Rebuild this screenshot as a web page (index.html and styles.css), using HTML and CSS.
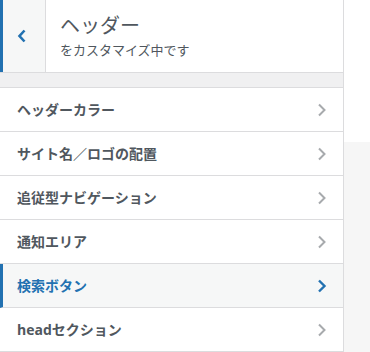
FILE: index.html
```html
<!DOCTYPE html>
<html lang="ja">
<head>
<meta charset="utf-8">
<link rel="stylesheet" href="styles.css">
</head>
<body>
<div class="layout">
  <div class="panel">
    <div class="head">
      <button class="back" aria-label="戻る">
        <svg width="10" height="14" viewBox="0 0 10 14"><polyline points="7.5,1.5 2.5,7 7.5,12.5" fill="none" stroke="#2271b1" stroke-width="2.6"/></svg>
      </button>
      <div class="titles">
        <div class="title">ヘッダー</div>
        <div class="sub">をカスタマイズ中です</div>
      </div>
    </div>
    <div class="strip"></div>
    <ul class="list">
      <li class="row"><span>ヘッダーカラー</span><svg class="chev" width="10" height="14" viewBox="0 0 10 14"><polyline points="2,1.5 7.5,7 2,12.5" fill="none" stroke="#a7aaad" stroke-width="2"/></svg></li>
      <li class="row"><span>サイト名／ロゴの配置</span><svg class="chev" width="10" height="14" viewBox="0 0 10 14"><polyline points="2,1.5 7.5,7 2,12.5" fill="none" stroke="#a7aaad" stroke-width="2"/></svg></li>
      <li class="row"><span>追従型ナビゲーション</span><svg class="chev" width="10" height="14" viewBox="0 0 10 14"><polyline points="2,1.5 7.5,7 2,12.5" fill="none" stroke="#a7aaad" stroke-width="2"/></svg></li>
      <li class="row"><span>通知エリア</span><svg class="chev" width="10" height="14" viewBox="0 0 10 14"><polyline points="2,1.5 7.5,7 2,12.5" fill="none" stroke="#a7aaad" stroke-width="2"/></svg></li>
      <li class="row active"><span>検索ボタン</span><svg class="chev" width="10" height="14" viewBox="0 0 10 14"><polyline points="2,1.5 7.5,7 2,12.5" fill="none" stroke="#2271b1" stroke-width="2.4"/></svg></li>
      <li class="row"><span><span class="latin">head</span>セクション</span><svg class="chev" width="10" height="14" viewBox="0 0 10 14"><polyline points="2,1.5 7.5,7 2,12.5" fill="none" stroke="#a7aaad" stroke-width="2"/></svg></li>
    </ul>
  </div>
  <div class="side">
    <div class="side-top"></div>
    <div class="side-bottom"></div>
  </div>
</div>
</body>
</html>
```

FILE: styles.css
```css
html, body {
  margin: 0;
  padding: 0;
  background: #fff;
}
body {
  font-family: "Noto Sans CJK JP", "Noto Sans", sans-serif;
  color: #50575e;
  width: 370px;
  height: 352px;
  overflow: hidden;
}
.layout {
  display: flex;
  height: 352px;
}
.panel {
  width: 343px;
  border-right: 1px solid #dcdcde;
  background: #fff;
  display: flex;
  flex-direction: column;
}
.head {
  display: flex;
  height: 72px;
  border-bottom: 1px solid #dcdcde;
}
.back {
  width: 46px;
  height: 72px;
  margin: 0;
  padding: 0;
  border: 0;
  border-left: 3px solid #2271b1;
  border-right: 1px solid #dcdcde;
  background: #f6f7f7;
  display: flex;
  align-items: center;
  justify-content: center;
  box-sizing: border-box;
}
.back svg {
  margin-left: -4px;
}
.titles {
  padding: 12px 0 0 14px;
  display: flex;
  flex-direction: column;
}
.title {
  font-size: 20px;
  line-height: 26px;
  font-weight: 400;
  color: #50575e;
}
.sub {
  font-size: 13px;
  line-height: 20px;
  margin-top: 2px;
  color: #50575e;
}
.strip {
  height: 15px;
  background: #f0f0f1;
  border-bottom: 1px solid #dcdcde;
}
.list {
  list-style: none;
  margin: 0;
  padding: 0;
}
.row {
  height: 43px;
  border-bottom: 1px solid #dcdcde;
  display: flex;
  align-items: center;
  justify-content: space-between;
  padding: 0 16px 0 17px;
  font-size: 14px;
  font-weight: 700;
  color: #50575e;
}
.row > span {
  margin-top: -1px;
}
.latin {
  font-family: "Open Sans", "Noto Sans", sans-serif;
  font-weight: 700;
}
.row.active {
  background: #f6f7f7;
  color: #2271b1;
  border-left: 3px solid #2271b1;
  padding-left: 14px;
}
.side {
  flex: 1;
  display: flex;
  flex-direction: column;
}
.side-top {
  height: 142px;
  background: #fff;
}
.side-bottom {
  flex: 1;
  background: #f6f6f6;
}
```
